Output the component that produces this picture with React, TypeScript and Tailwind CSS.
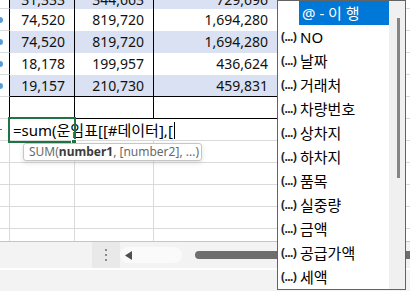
import React from "react";

const FONT = "font-['Noto_Sans','Noto_Sans_CJK_KR',sans-serif]";

type Row = { b: string; c: string; d: string; band: boolean };

const tableRows: Row[] = [
  { b: "31,333", c: "344,663", d: "729,696", band: true },
  { b: "74,520", c: "819,720", d: "1,694,280", band: false },
  { b: "74,520", c: "819,720", d: "1,694,280", band: true },
  { b: "18,178", c: "199,957", d: "436,624", band: false },
  { b: "19,157", c: "210,730", d: "459,831", band: true },
];

const fields = ["NO", "날짜", "거래처", "차량번호", "상차지", "하차지", "품목", "실중량", "금액", "공급가액", "세액"];

const num = "flex items-center justify-end pr-[9px] text-[14px] leading-none text-[#111] border-r border-r-black";

function GridRow() {
  return (
    <div className="flex h-[22px]">
      <div className="w-[10px] border-r border-b border-[#dadada]" />
      <div className="w-[65px] border-r border-b border-[#dadada]" />
      <div className="w-[79px] border-r border-b border-[#dadada]" />
      <div className="w-[124px] border-r border-b border-[#dadada]" />
      <div className="flex-1 border-b border-[#dadada]" />
    </div>
  );
}

export default function App() {
  return (
    <div className={`relative flex h-[291px] w-[410px] flex-col overflow-hidden bg-white ${FONT}`}>
      {/* sheet grid */}
      <div className="h-[241px] overflow-hidden">
        <div className="-mt-[13px] flex flex-col">
          {tableRows.map((r, i) => {
            const bg = r.band ? "bg-[#d9e1f2]" : "bg-white";
            const last = i === tableRows.length - 1 ? "border-b border-b-black" : "";
            return (
              <div key={i} className={`flex h-[22px] ${i === 0 ? "pt-[3px]" : ""}`}>
                <div className="flex w-[10px] items-center border-r border-b border-r-black border-b-[#dadada]">
                  {i > 0 && <span className="h-[6px] w-[3px] rounded-r-full bg-[#5b9bd5]" />}
                </div>
                <div className={`w-[65px] ${num} ${bg} ${last}`}>{r.b}</div>
                <div className={`w-[79px] ${num} ${bg} ${last}`}>{r.c}</div>
                <div className={`w-[124px] ${num} ${bg} ${last}`}>{r.d}</div>
                <div className="flex-1 border-b border-[#dadada]" />
              </div>
            );
          })}

          {/* empty table row */}
          <div className="flex h-[22px]">
            <div className="w-[10px] border-r border-b border-r-black border-b-[#dadada]" />
            <div className="w-[65px] border-r border-b border-black" />
            <div className="w-[79px] border-r border-b border-black" />
            <div className="w-[124px] border-r border-b border-black" />
            <div className="flex-1 border-b border-[#dadada]" />
          </div>

          {/* editing row */}
          <div className="relative flex h-[22px]">
            <div className="flex w-[10px] items-center border-r border-b border-[#dadada]">
              <span className="h-[1px] w-[2px] bg-[#3a6fb0]" />
            </div>
            <div className="flex w-[268px] items-center whitespace-nowrap border-b border-[#dadada] pl-[3px] pt-[1px] text-[15px] leading-none text-black">
              <span>=sum(운임표[[#데이터],[</span>
              <span className="ml-[1px] h-[17px] w-[1px] bg-black" />
            </div>
            <div className="flex-1 border-b border-[#dadada]" />
            <div className="absolute left-[8px] top-[-2px] h-[26px] w-[68px] border-2 border-[#217346]" />
            <div className="absolute left-[71px] top-[20px] h-[6px] w-[6px] border border-white bg-[#217346]" />
          </div>

          <GridRow />
          <GridRow />
          <GridRow />
          <GridRow />
          <GridRow />
        </div>
      </div>

      {/* horizontal scroll bar */}
      <div className="h-[1px] bg-[#c6c6c6]" />
      <div className="flex h-[26px] items-center bg-[#f3f3f3]">
        <div className="w-[92px]" />
        <div className="flex h-full w-[28px] flex-col items-center justify-center gap-[3px] bg-[#e9e9e9]">
          <span className="h-[2px] w-[2px] bg-[#8c8c8c]" />
          <span className="h-[2px] w-[2px] bg-[#8c8c8c]" />
          <span className="h-[2px] w-[2px] bg-[#8c8c8c]" />
        </div>
        <div className="flex h-[16px] w-[62px] items-center rounded-full bg-[#fafafa] pl-[5px]">
          <svg width="7" height="9" viewBox="0 0 7 9">
            <polygon points="7,0 0,4.5 7,9" fill="#4f4f4f" />
          </svg>
        </div>
        <div className="w-[13px]" />
        <div className="h-[8px] flex-1 rounded-l-full bg-[#6e6e6e]" />
      </div>
      <div className="h-[2px] bg-white" />
      <div className="flex-1 bg-[#f3f3f3]" />

      {/* function tooltip */}
      <div className="absolute left-[23px] top-[143px] flex h-[18px] w-[179px] items-center whitespace-nowrap rounded-[3px] border border-[#c6c6c6] bg-white px-[5px] text-[12px] leading-none text-[#6a6a6a] shadow-[0_2px_5px_rgba(0,0,0,0.12)]">
        SUM(<b className="font-bold text-[#3c3c3c]">number1</b>, [number2], ...)
      </div>

      {/* autocomplete list */}
      <div className="absolute left-[277px] top-0 flex h-[290px] w-[129px] border border-[#646464] bg-white">
        <div className="flex flex-1 flex-col">
          <div className="flex h-[24px]">
            <div className="w-[21px]" />
            <div className="flex flex-1 items-center whitespace-pre bg-[#0078d7] pl-[3px] text-[15px] leading-none text-white">
              @ - 이 행
            </div>
          </div>
          {fields.map((f) => (
            <div key={f} className="flex h-[24px] items-center">
              <div className="w-[22px] pl-[3px] text-[12px] font-bold leading-none tracking-[-0.6px] text-[#222]">(...)</div>
              <div className="text-[15px] leading-none text-black">{f}</div>
            </div>
          ))}
        </div>
        <div className="w-[16px] bg-[#f0f0f0]">
          <div className="ml-[8px] mt-[17px] h-[160px] w-[3px] bg-[#858585]" />
        </div>
      </div>
    </div>
  );
}
